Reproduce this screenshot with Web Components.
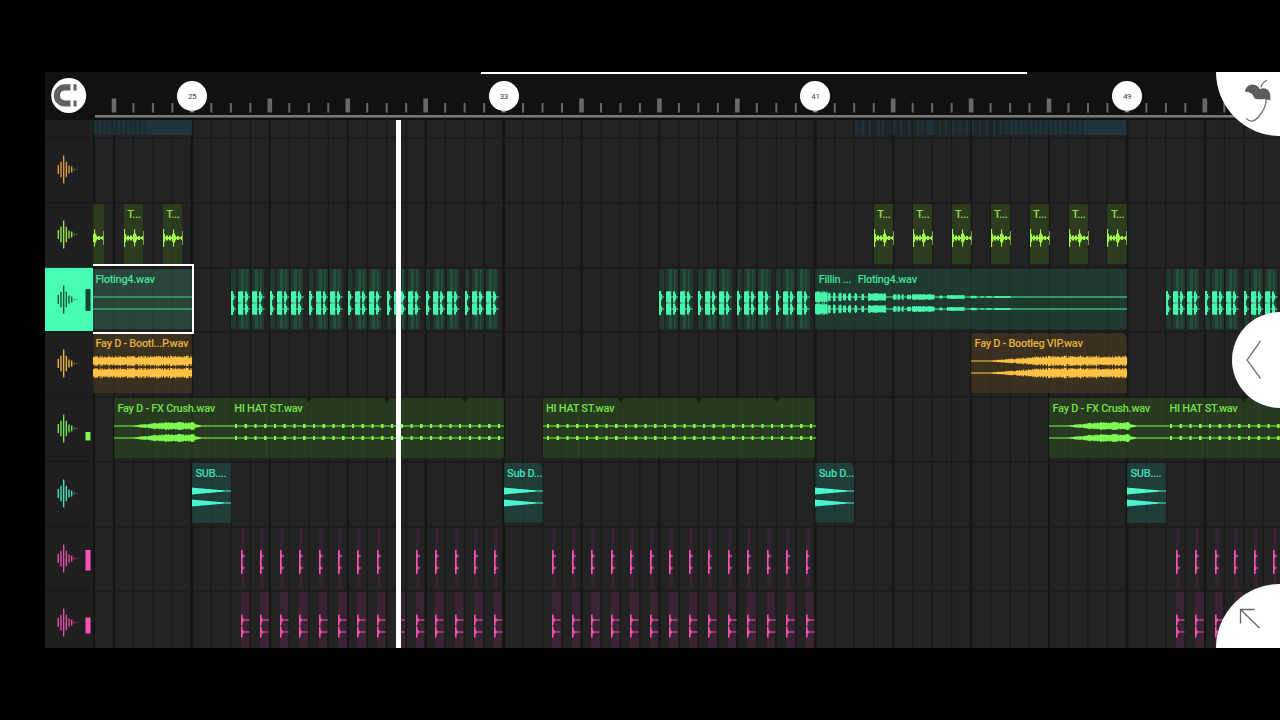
<!DOCTYPE html>
<html lang="en">
<head>
<meta charset="utf-8">
<title>Playlist</title>
<style>
  body { margin: 0; background: #000; overflow: hidden; font-family: Roboto, "Liberation Sans", sans-serif; }
</style>
</head>
<body>
<daw-app>
  <time-ruler slot="ruler"></time-ruler>
  <play-list slot="playlist"></play-list>
</daw-app>

<script>
const BAR = 38.96;
const LANE_WIDTH = 1187;
// x inside a lane for a bar number
const barX = (bar) => 98.9 + (bar - 25) * BAR;

class DawApp extends HTMLElement {
  constructor() {
    super();
    this.attachShadow({ mode: 'open' });
    this.shadowRoot.innerHTML = `
      <style>
        :host { display: flex; box-sizing: border-box; width: 1280px; height: 720px; padding: 72px 0 72px 45px; background: #000; }
        main { position: relative; flex: 1; display: flex; flex-direction: column; overflow: hidden; background: #111; }
        .scroll { position: absolute; left: 436px; top: 0; width: 546px; height: 2px; background: #fff; }
        .playhead { position: absolute; left: 350.5px; top: 48px; bottom: 0; width: 5px; background: #fff; z-index: 5; }
        corner-button { position: absolute; z-index: 6; right: 0; }
        .menu { top: 0; }
        .back { top: 240px; }
        .expand { bottom: 0; }
      </style>
      <main>
        <slot name="ruler"></slot>
        <slot name="playlist"></slot>
        <div class="scroll"></div>
        <div class="playhead"></div>
        <corner-button class="menu" shape="top">
          <svg width="64" height="64" fill="none" stroke="#707070" stroke-width="1.3" stroke-linecap="round">
            <path d="M50.5 8.5C48 9.500 46 12 45 15M50.300 26C50.500 33 46 41 42 45.500C38 50 33.500 50 30.800 46.800"/>
            <path d="M29 20C29.500 15 33.500 12 37.500 12.700C41 13 43 15 43.800 17.300C46 15.800 50 16 52.500 18.500C54.500 21 54.800 25 54.200 28.500C52 27.500 49 27.300 46.500 27.300C43 27 41 27.500 38.800 26.500C37.500 24.500 37 22.500 34.500 21C32.500 20 30.500 19.500 29 20Z" fill="#5c5c5c" stroke="none"/>
          </svg>
        </corner-button>
        <corner-button class="back" shape="middle">
          <svg width="48" height="96" fill="none" stroke="#777" stroke-width="1.3"><path d="M28.5 29L15 48L28.500 66.500"/></svg>
        </corner-button>
        <corner-button class="expand" shape="bottom">
          <svg width="64" height="64" fill="none" stroke="#666" stroke-width="1.3"><path d="M24.500 39.500V25.500H38.500M24.500 25.500L43.500 44"/></svg>
        </corner-button>
      </main>
    `;
  }
}

class CornerButton extends HTMLElement {
  constructor() {
    super();
    this.attachShadow({ mode: 'open' });
    this.shadowRoot.innerHTML = `
      <style>
        :host { display: block; width: 64px; height: 64px; background: #fff; overflow: hidden; }
        :host([shape="top"]) { border-radius: 0 0 0 64px; }
        :host([shape="middle"]) { width: 48.5px; height: 96px; border-radius: 48px 0 0 48px; }
        :host([shape="bottom"]) { border-radius: 64px 0 0 0; }
      </style>
      <slot></slot>
    `;
  }
}

class TimeRuler extends HTMLElement {
  constructor() {
    super();
    this.attachShadow({ mode: 'open' });
  }

  connectedCallback() {
    let ticks = '';
    for (let i = 0; i < 60; i++) {
      const x = barX(23) + i * BAR / 2;
      ticks += i % 4 === 0
        ? `<rect x="${x - 2.3}" y="26.500" width="4.600" height="14"/>`
        : `<rect x="${x - 1}" y="31" width="2" height="9.500"/>`;
    }
    const markers = [25, 33, 41, 49]
      .map((bar) => `<ruler-marker style="left:${barX(bar) - 14.8}px">${bar}</ruler-marker>`)
      .join('');
    this.shadowRoot.innerHTML = `
      <style>
        :host { display: flex; height: 48px; background: #111; }
        .magnet { width: 48px; flex: none; padding: 6px 0 0 6px; box-sizing: border-box; }
        .bars { position: relative; flex: 1; }
        .bars svg { display: block; }
        ruler-marker { position: absolute; top: 9px; }
      </style>
      <div class="magnet">
        <svg width="36" height="36">
          <circle cx="17.700" cy="17.500" r="17.500" fill="#fff"/>
          <path d="M19.500 9.300H14A8.100 8.100 0 0 0 14 25.500H19.500" fill="none" stroke="#606060" stroke-width="6.200"/>
          <path d="M22.500 6.200h3v6.200h-3zM22.500 22.400h3v6.200h-3z" fill="#606060"/>
        </svg>
      </div>
      <div class="bars">
        <svg width="${LANE_WIDTH}" height="48" fill="#686868">
          ${ticks}
          <rect x="2" y="43" width="1185" height="2.600" fill="#777"/>
        </svg>
        ${markers}
      </div>
    `;
  }
}

class RulerMarker extends HTMLElement {
  constructor() {
    super();
    this.attachShadow({ mode: 'open' });
    this.shadowRoot.innerHTML = `
      <style>
        :host { display: flex; align-items: center; justify-content: center; width: 30px; height: 30px; border-radius: 50%; background: #fff; color: #444; font-size: 8px; letter-spacing: -.4px; }
        i { position: absolute; left: 13px; top: 29px; border: 2px solid transparent; border-top-color: #ccc; }
      </style>
      <slot></slot><i></i>
    `;
  }
}

class TrackHeader extends HTMLElement {
  connectedCallback() {
    if (this.shadowRoot) return;
    this.attachShadow({ mode: 'open' });
    const heights = [9, 15.500, 28, 15.500, 8, 6, 2.500, 1];
    const bars = heights
      .map((h, i) => `<rect x="${12.6 + i * 2.68}" y="${32.5 - h / 2}" width="${i > 5 ? 1 : 1.4}" height="${h}" opacity="${i > 5 ? 0.6 : 0.9}"/>`)
      .join('');
    const [top, height] = (this.getAttribute('meter') || '0,0').split(',');
    this.shadowRoot.innerHTML = `
      <style>
        :host { display: block; width: 48px; flex: none; color: var(--accent); background: #1f1e20; box-sizing: border-box; border-top: 1.5px solid #19191a; }
        :host([selected]) { background: #47ffb2; color: #123f2c; border-top-color: #123f2c; }
        svg { display: block; margin-top: -1px; }
      </style>
      <svg width="48" height="64" fill="currentColor">
        ${bars}
        <rect x="40.500" y="${top}" width="5" height="${height}"/>
      </svg>
    `;
  }
}

// small repeatable noise so that every clip keeps its shape
function noise(i) {
  const v = Math.sin(i * 12.9898 + 4.1) * 43758.5453;
  return v - Math.floor(v);
}

const CHOPS = [
  [0, 12, 6], [13, 15, 5], [18, 20, 5], [23.5, 26, 4.5], [28, 30.5, 4], [33, 35.5, 4], [39, 41.5, 4],
  [46, 48.5, 3.5], [52.5, 70.5, 4], [77.5, 81, 3], [82, 84.5, 3], [86, 88, 3], [91.5, 95.5, 2.5],
  [96.5, 119, 3], [124, 127, 1.6], [131.5, 149, 2], [155, 161, 1.3], [165, 168, 1], [171, 176, 1], [179, 195, 1.1]
];
const PERC = [9, 4, 1.2, 2.5, 2.5, 1, 2.5, 2.5, 1, 4, 8.5, 4.5, 2.5, 1, 2, 2, 0.8, 1, 2, 7];

// half height of the waveform at x
const waves = {
  flat: () => 0.5,
  loud: (x) => 2.9 + noise(x) * 2.5,
  riser: (x) => (x < 18 ? 0.5 : Math.max(0.5, Math.min(1, (x - 10) / 65) * (2.9 + noise(x) * 2.5))),
  crush: (x) => {
    if (x < 15 || x > 89) return 0.5;
    if (x > 80) return Math.max(0.6, 2 - (x - 80) / 5);
    return Math.max(0.6, Math.min(1, (x - 12) / 36) * (2.7 + noise(x) * 1.2 + Math.sin(x / 2) * 0.3));
  },
  hat: (x) => ((x + 6) % 9.74 < 2.2 ? 1.9 : 0.5),
  sub: (x, w) => Math.max(0.6, 3.4 * (1 - x / w)),
  filling: (x) => {
    const hit = CHOPS.find(([a, b]) => x >= a && x <= b);
    return hit ? hit[2] * (0.7 + noise(x) * 0.35) : 0.5;
  },
  perc: (x) => PERC[Math.min(19, Math.floor(x))],
  stutter1: (x) => (x < 2 ? 6 : x < 3 ? 3 : 0.5),
  stutter2: (x) => (x < 5 ? 5.2 + noise(x) : x > 6.5 && x < 9 ? 5.6 : x >= 9 && x < 10 ? 3 : 0.5),
  kick: (x) => (x < 1.5 ? 6 : x < 2 ? 2 : 0.5),
  snare: (x) => (x < 1.5 ? 5.5 : x < 2.5 ? 1.8 : 0.5)
};

class AudioClip extends HTMLElement {
  constructor() {
    super();
    this.attachShadow({ mode: 'open' });
  }

  connectedCallback() {
    const width = Number(this.getAttribute('width'));
    const wave = this.getAttribute('wave');
    this.style.width = width + 'px';
    this.shadowRoot.innerHTML = `
      <style>
        :host { display: block; position: absolute; top: 2px; height: 60px; color: var(--accent); box-sizing: border-box; }
        .body { position: absolute; inset: 0; background: var(--body); opacity: .65; }
        .name { position: relative; display: block; padding: 4px 0 0 var(--pad, 3.5px); font-size: 11px; line-height: 13px; font-weight: 500; letter-spacing: -.3px; white-space: nowrap; opacity: .88; }
        svg { position: absolute; left: 0; top: 0; overflow: visible; }
        :host([selected]) { z-index: 3; }
        :host([selected]) .body { background: #305746; }
        :host([selected])::after { content: ""; position: absolute; left: 0; top: -5px; right: -2px; bottom: -5px; border: 2.500px solid #fff; border-left: 0; }
        :host([cut]) .body { clip-path: polygon(0 0, calc(100% - 4px) 0, 100% 4px, 100% 100%, 0 100%); }
      </style>
      <div class="body"></div>
      <svg width="${width}" height="60">${this.stripes()}${this.drawWave(wave, width)}${this.notches()}</svg>
      <span class="name"><slot></slot></span>
    `;
  }

  stripes() {
    if (this.getAttribute('wave') !== 'stutter2') return '';
    return `<path d="M3 0H6V60H3zM8 0H9.500V60H8z" fill="currentColor" opacity=".12"/>`;
  }

  drawWave(wave, width) {
    const centers = wave === 'perc' ? [34] : [28, 40];
    const start = Number(this.getAttribute('offset') || 0);
    let d = '';
    for (const cy of centers) {
      for (let x = 0; x < width; x += 0.5) {
        const a = waves[wave](x + start, width);
        d += `M${x} ${(cy - a).toFixed(1)}h.6v${(a * 2).toFixed(1)}h-.6z`;
      }
    }
    return `<path d="${d}" fill="currentColor" opacity="${wave === 'flat' ? 0.8 : 1}"/>`;
  }

  notches() {
    return (this.getAttribute('notches') || '').split(',').filter(Boolean)
      .map((x) => `<path d="M${x - 4} -1h8l-4 5z" fill="#171b15"/>`).join('');
  }
}

class TrackLane extends HTMLElement {
  constructor() {
    super();
    this.attachShadow({ mode: 'open' });
    this.shadowRoot.innerHTML = `
      <style>
        :host { display: block; position: relative; flex: 1; min-width: 0; }
      </style>
      <slot></slot>
    `;
  }
}

const range = (from, to, step = 1) => {
  const list = [];
  for (let b = from; b <= to; b += step) list.push(b);
  return list;
};
const LEFT = 25 - 98.9 / BAR;

function stutter(from, to) {
  return range(from, to - 1).flatMap((b) => [
    { at: b, px: 4.7, wave: 'stutter1' },
    { at: b + 7 / BAR, px: 12, wave: 'stutter2' },
    { at: b + 21 / BAR, px: 12.3, wave: 'stutter2' }
  ]);
}

const hits = [...range(26.25, 29.75, 0.5), ...range(30.75, 32.75, 0.5), ...range(34.25, 40.75, 0.5), ...range(50.25, 53, 0.5)];

const tracks = [
  { color: '#efa83e', clips: [] },
  { color: '#a6f650', body: '#334a1c', clips: [
    { at: LEFT, px: 10.5, wave: 'perc', offset: 9 },
    ...[23.25, 24.25, ...range(42.5, 48.5)].map((at) => ({ at, px: 19.5, wave: 'perc', name: 'T...' }))
  ] },
  { color: '#48f5ad', body: '#204636', selected: true, meter: '22,22', clips: [
    { at: LEFT, to: 25, wave: 'flat', name: 'Floting4.wav', selected: true, pad: 2.5 },
    ...stutter(26, 33), ...stutter(37, 41), ...stutter(50, 53),
    { at: 41, to: 42, wave: 'filling', name: 'Fillin ...' },
    { at: 42, to: 49, wave: 'filling', offset: BAR, name: 'Floting4.wav' }
  ] },
  { color: '#ffc244', body: '#47391e', clips: [
    { at: LEFT, to: 25, wave: 'loud', name: 'Fay D - Bootl...P.wav', pad: 2.5 },
    { at: 45, to: 49, wave: 'riser', name: 'Fay D - Bootleg VIP.wav', cut: true }
  ] },
  { color: '#7ff850', body: '#2b481e', meter: '36,8.500', clips: [
    { at: 23, to: 26, wave: 'crush', name: 'Fay D - FX Crush.wav' },
    { at: 26, to: 33, wave: 'hat', name: 'HI HAT ST.wav', notches: [2, 4, 6] },
    { at: 34, to: 41, wave: 'hat', name: 'HI HAT ST.wav', notches: [2, 4, 6] },
    { at: 47, to: 50, wave: 'crush', name: 'Fay D - FX Crush.wav' },
    { at: 50, to: 53, wave: 'hat', name: 'HI HAT ST.wav', notches: [2] }
  ] },
  { color: '#49f5cc', body: '#1e4b45', clips: [
    { at: 25, to: 26, wave: 'sub', name: 'SUB....' },
    { at: 33, to: 34, wave: 'sub', name: 'Sub D...', cut: true },
    { at: 41, to: 42, wave: 'sub', name: 'Sub D...', cut: true },
    { at: 49, to: 50, wave: 'sub', name: 'SUB....' }
  ] },
  { color: '#fa55b2', body: '#40233a', meter: '24,20.500', clips: hits.map((at) => ({ at, px: 4, wave: 'kick' })) },
  { color: '#fa55b2', body: '#47243c', meter: '27.500,16', clips: [...hits, 30.25].map((at) => ({ at, px: 8.5, wave: 'snare' })) }
];

class PlayList extends HTMLElement {
  constructor() {
    super();
    this.attachShadow({ mode: 'open' });
  }

  clip(c) {
    const left = barX(c.at);
    const width = c.px || barX(c.to) - left;
    const attrs = [
      `wave="${c.wave}"`,
      `width="${width.toFixed(2)}"`,
      c.offset ? `offset="${c.offset}"` : '',
      c.notches ? `notches="${c.notches.map((n) => (n * BAR).toFixed(1))}"` : '',
      c.selected ? 'selected' : '',
      c.cut ? 'cut' : ''
    ].join(' ');
    return `<audio-clip ${attrs} style="left:${left.toFixed(2)}px${c.pad ? `;--pad:${c.pad}px` : ''}">${c.name || ''}</audio-clip>`;
  }

  // piano roll preview at the bottom of the track scrolled out of view
  preview() {
    let d = '';
    for (let x = 0; x < 53; x += 4.7) d += `M${x + 1} 0h2.600v15h-2.600z`;
    const right = [855, 862, 869, 878, 882, 893, 900, 908, 917, 921, 928, 939, 945, 952, 959, 966, 972, 979, 986, 993, 1000];
    for (const x of right) d += `M${x - 93} 0h2v15h-2z`;
    for (let x = 1005; x < 1083; x += 4.9) d += `M${x - 93} 0h2.800v15h-2.800z`;
    return `<svg width="${LANE_WIDTH}" height="17">
      <path d="M0 0H99V15H0zM912 0H1034V15H912z" fill="#1c2c32" opacity=".6"/>
      <path d="M762 0H912V15H762z" fill="#1d3038" opacity=".25"/>
      <path d="${d}M54 0H99V15H54zM834 0h7v15h-7zM990 0h43v15h-43z" fill="#1d3842" opacity=".75"/>
    </svg>`;
  }

  connectedCallback() {
    const rows = tracks.map((t) => `
      <div class="row" style="--accent:${t.color};--body:${t.body || '#232323'}">
        <track-header ${t.selected ? 'selected' : ''} meter="${t.meter || '0,0'}"></track-header>
        <track-lane>${t.clips.map((c) => this.clip(c)).join('')}</track-lane>
      </div>`).join('');
    let lines = '';
    for (let i = 0; i < 62; i++) {
      const x = 48 + barX(23) + i * BAR / 2;
      const w = (i + 4) % 16 === 8 ? 3 : i % 4 === 0 ? 2 : 1.4;
      lines += `<rect x="${x - w / 2}" width="${w}" height="528" fill="${w > 1.5 ? '#151515' : '#191919'}"/>`;
    }
    this.shadowRoot.innerHTML = `
      <style>
        :host { display: flex; flex-direction: column; position: relative; flex: none; height: 528px; overflow: hidden; background: #232323; }
        .grid { position: absolute; left: 0; top: 0; }
        .row { position: relative; display: flex; flex: none; height: 64.75px; }
        .row track-lane { box-shadow: inset 0 1.5px #1a1a1a; }
        .row.top { height: 17px; }
        .gutter { width: 48px; flex: none; background: #1f1e20; }
      </style>
      <svg class="grid" width="1235" height="528">${lines}<rect x="48" width="2" height="528" fill="#131313"/></svg>
      <div class="row top"><div class="gutter"></div>${this.preview()}</div>
      ${rows}
    `;
  }
}

customElements.define('corner-button', CornerButton);
customElements.define('ruler-marker', RulerMarker);
customElements.define('track-header', TrackHeader);
customElements.define('audio-clip', AudioClip);
customElements.define('track-lane', TrackLane);
customElements.define('time-ruler', TimeRuler);
customElements.define('play-list', PlayList);
customElements.define('daw-app', DawApp);
</script>
</body>
</html>
